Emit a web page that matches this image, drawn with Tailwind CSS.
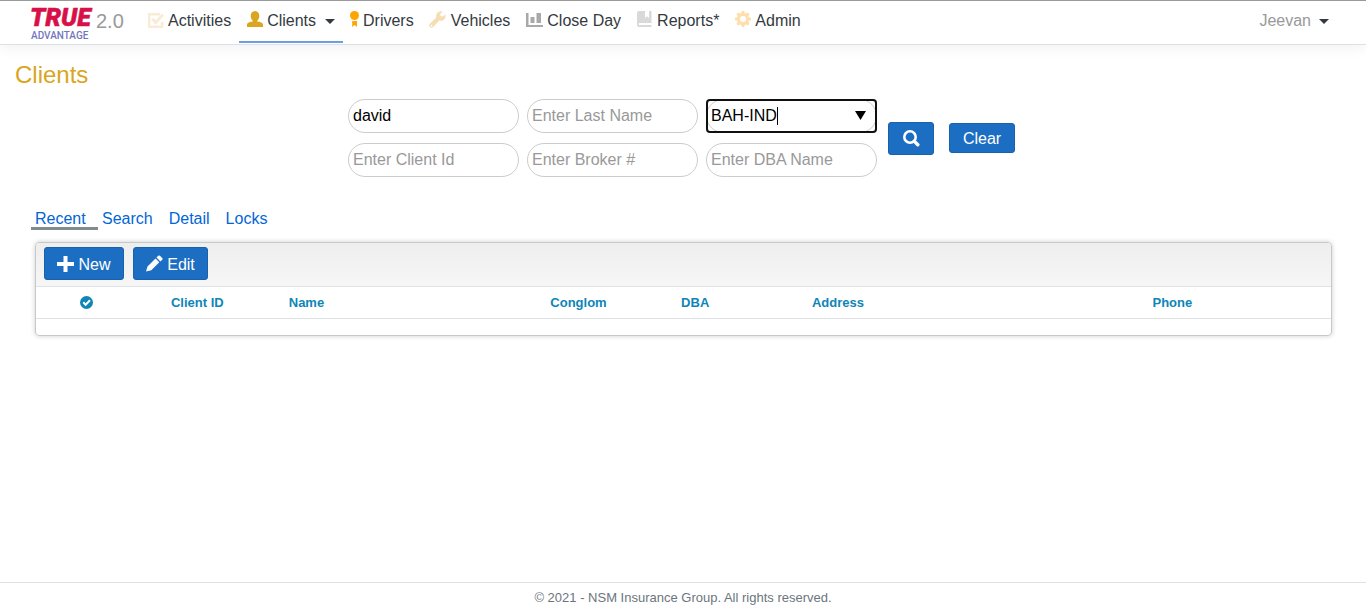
<!DOCTYPE html>
<html lang="en">
<head>
<meta charset="utf-8">
<meta name="viewport" content="width=device-width, initial-scale=1">
<title>Clients - True Advantage 2.0</title>
<script src="https://cdn.jsdelivr.net/npm/@tailwindcss/browser@4"></script>
</head>
<body class="flex min-h-screen flex-col bg-white font-['Liberation_Sans',Arial,sans-serif] text-base text-[#212529]">
<header class="flex h-[45px] shrink-0 items-start border-t border-b border-t-[#999] border-b-[#dee2e6] pr-[37px] pl-[29px] shadow-[0_4px_12px_rgba(0,0,0,0.05)]">
  <a href="#" class="flex w-[111px] items-start gap-[3px]" aria-label="True Advantage 2.0">
    <svg class="h-10 w-16 overflow-visible" viewBox="0 0 64 40">
      <text x="1" y="25" font-family="Roboto, sans-serif" font-size="25" font-weight="900" font-style="italic" fill="#d81048" stroke="#d81048" stroke-width="0.500">TRUE</text>
      <text x="2" y="38" font-family="Roboto, sans-serif" font-size="10" font-weight="500" fill="#7376bd">ADVANTAGE</text>
    </svg>
    <span class="mt-1 text-xl leading-8 text-[#999]">2.0</span>
  </a>
  <nav class="flex h-[42px] text-[#343a40]">
    <a href="#" class="flex items-start gap-1 px-2 pt-2">
      <svg class="mt-1 h-4 w-4" viewBox="0 0 16 16" fill="none" stroke="#faebd7"><path d="M12 1.200H1.200v12.600H14V9" stroke-width="2.400"/><path d="M4.200 5.800l3.500 3.800L15 1.500" stroke-width="3"/></svg>
      <span>Activities</span></a>
    <a href="#" class="flex items-start gap-1 border-b-2 border-[#6b9fe0] px-2 pt-2">
      <svg class="mt-[2px] h-4 w-4" viewBox="0 0 16 16" fill="#daa520"><path d="M8 0C5.200 0 3.700 2.200 3.700 5c0 2 .8 3.700 2 4.700v.8C3.500 10.900 0 11.500 0 13.700V16h16v-2.300c0-2.200-3.500-2.800-5.700-3.200v-.8c1.200-1 2-2.700 2-4.700 0-2.800-1.500-5-4.300-5z"/></svg>
      <span>Clients</span>
      <svg class="mt-[10px] ml-[5px] h-[5px] w-[10px]" viewBox="0 0 10 5" fill="#343a40"><path d="M0 0h10L5 5z"/></svg></a>
    <a href="#" class="flex items-start gap-1 px-[7px] pt-2">
      <svg class="mt-[2px] h-4 w-[9px]" viewBox="0 0 9 16"><circle cx="4.500" cy="4.500" r="4.500" fill="orange"/><path d="M2.200 10h4.800v6l-2.400-2L2.200 16z" fill="orange"/></svg>
      <span>Drivers</span></a>
    <a href="#" class="flex items-start gap-[5px] px-2 pt-2">
      <svg class="mt-[2px] h-[17px] w-[17px]" viewBox="0 0 17 17" fill="#f5deb3"><path fill-rule="evenodd" d="M16.500 3.400c.5 2.400-.5 4.800-2.400 5.800-1.200.6-2.500.6-3.700.3L4.200 16c-.9 1-2.500 1-3.400.1s-.9-2.500.1-3.400L7.300 6.600C6.700 4.700 7.200 2.500 8.900 1.200 10.200.2 12 0 13.500.4L11.200 2.900l.4 2.100 2.200.5zM2.500 13.700a.9.9 0 1 0 0 1.800.9.9 0 0 0 0-1.800z"/></svg>
      <span>Vehicles</span></a>
    <a href="#" class="flex items-start gap-1 px-2 pt-2">
      <svg class="mt-[4px] h-[15px] w-[17px]" viewBox="0 0 17 15" fill="#a9a9a9"><path d="M0 0h2.500v12H17v2H0zM4.500 4h4v6h-4zM10.500 0h4.500v10h-4.500z"/></svg>
      <span>Close Day</span></a>
    <a href="#" class="flex items-start gap-[5px] px-2 pt-2">
      <svg class="mt-[2px] h-4 w-[15px]" viewBox="0 0 15 16" fill="#d9d9d9"><path d="M2 0h6v7l2-1.700L12 7V0h2.500v12H2.700c-1.300 0-1.300 2 0 2H14.500v2H2c-1.200 0-2-.8-2-2V2C0 .8.800 0 2 0z"/></svg>
      <span>Reports*</span></a>
    <a href="#" class="flex items-start gap-1 px-2 pt-2">
      <svg class="mt-[2px] h-4 w-4" viewBox="0 0 16 16" fill="#ffdead"><path fill-rule="evenodd" d="M6.700 0h2.600l.5 2.200 1 .4 2-1.200 1.800 1.800-1.200 2 .4 1 2.200.5v2.600l-2.200.5-.4 1 1.200 2-1.800 1.800-2-1.200-1 .4-.5 2.200H6.700l-.5-2.200-1-.4-2 1.200-1.800-1.800 1.200-2-.4-1L0 9.300V6.700l2.200-.5.4-1-1.200-2 1.800-1.800 2 1.200 1-.4zM8 5a3 3 0 1 0 0 6 3 3 0 0 0 0-6z"/></svg>
      <span>Admin</span></a>
  </nav>
  <button type="button" class="ml-auto flex items-center gap-2 pt-2 text-[#999]">Jeevan
    <svg class="h-[5px] w-[10px]" viewBox="0 0 10 5" fill="#343a40"><path d="M0 0h10L5 5z"/></svg></button>
</header>

<main class="grow">
  <h1 class="px-[15px] pt-4 text-2xl leading-7 text-[#daa520]">Clients</h1>
  <form class="mt-[10px] flex items-center justify-center gap-[11px] pr-[3px]">
    <div class="grid grid-cols-3 gap-x-2 gap-y-[10px]">
      <input aria-label="First name" value="david" class="h-[34px] w-[171px] rounded-full border border-[#ccc] px-1 text-black placeholder:text-[#999]">
      <input aria-label="Last name" placeholder="Enter Last Name" class="h-[34px] w-[171px] rounded-full border border-[#ccc] px-1 placeholder:text-[#999]">
      <div class="relative">
        <input aria-label="Conglom" list="congloms" value="BAH-IND" class="h-[34px] w-[171px] rounded-full border border-[#ccc] px-1 text-black">
        <datalist id="congloms"><option value="BAH-IND"></option></datalist>
        <span class="pointer-events-none absolute inset-0 rounded border-2 border-[#101010]"></span>
        <span class="pointer-events-none absolute top-2 left-[71px] h-[18px] w-px bg-black"></span>
        <svg class="pointer-events-none absolute top-3 right-[11px] h-[9px] w-[11px]" viewBox="0 0 11 9"><path d="M0 0h11L5.500 9z"/></svg>
      </div>
      <input aria-label="Client Id" placeholder="Enter Client Id" class="h-[34px] w-[171px] rounded-full border border-[#ccc] px-1 placeholder:text-[#999]">
      <input aria-label="Broker number" placeholder="Enter Broker #" class="h-[34px] w-[171px] rounded-full border border-[#ccc] px-1 placeholder:text-[#999]">
      <input aria-label="DBA name" placeholder="Enter DBA Name" class="h-[34px] w-[171px] rounded-full border border-[#ccc] px-1 placeholder:text-[#999]">
    </div>
    <div class="flex items-center gap-[15px]">
      <button type="button" aria-label="Search" class="flex h-[33px] w-[46px] items-center justify-center rounded-[3px] border border-[#1861ac] bg-[#1b6ec2]">
        <svg class="h-[17px] w-[17px]" viewBox="0 0 17 17" fill="none" stroke="#fff"><circle cx="7" cy="7" r="5.700" stroke-width="2.600"/><path d="M11.400 11.400l3.400 3.400" stroke-width="3.400" stroke-linecap="round"/></svg></button>
      <button type="button" class="h-[30px] w-[66px] rounded-[3px] border border-[#1861ac] bg-[#1b6ec2] pt-px leading-7 text-white">Clear</button>
    </div>
  </form>

  <nav class="mt-[29px] flex pl-[31px] text-[#0366d6]">
    <a href="#" class="w-[67px] border-b-3 border-[#7f8c8d] pt-1 pl-1 leading-[17px]">Recent</a>
    <a href="#" class="pt-1 pr-4 pl-1 leading-[17px]">Search</a>
    <a href="#" class="pt-1 pr-4 leading-[17px]">Detail</a>
    <a href="#" class="pt-1 leading-[17px]">Locks</a>
  </nav>

  <section class="mt-3 mr-[34px] ml-[35px] rounded border border-[#c8c8c8] pb-4 shadow-[0_0_5px_rgba(0,0,0,0.2)]">
    <div class="flex h-11 items-start gap-[9px] rounded-t border-b border-[#dee2e6] bg-linear-to-b from-[#eee] to-[#f6f6f6] px-2 pt-1">
      <button type="button" class="flex h-[33px] w-20 items-center justify-center gap-1 rounded-[3px] border border-[#1861ac] bg-[#1b6ec2] text-white">
        <svg class="h-4 w-[17px]" viewBox="0 0 17 16" fill="#fff"><path d="M6.500 0h4v6H17v4h-6.500v6h-4v-6H0V6h6.500z"/></svg><span class="pt-[2px]">New</span></button>
      <button type="button" class="flex h-[33px] w-[75px] items-center justify-center gap-1 rounded-[3px] border border-[#1861ac] bg-[#1b6ec2] text-white">
        <svg class="h-[17px] w-[17px]" viewBox="0 0 17 17" fill="#fff"><path d="M0 16.500l1.500-5L9.500 3.500l3.800 3.800-8 8zM10.500 2.500l1.700-1.700q.9-.8 1.800 0l2.200 2.200q.8.9 0 1.700l-1.800 1.700z"/></svg><span class="pt-[2px]">Edit</span></button>
    </div>
    <table class="w-full table-fixed text-left text-[13px] leading-5 text-[#0e85b8]">
      <thead>
        <tr class="h-[31px] border-b border-[#dee2e6]">
          <th scope="col" class="w-[9.8%] pl-[44px]"><svg role="img" aria-label="Selected" class="h-[13px] w-[13px]" viewBox="0 0 13 13"><circle cx="6.500" cy="6.500" r="6.500" fill="#0e85b8"/><path d="M3.300 6.300l2.300 2.400L10 4.300" fill="none" stroke="#fff" stroke-width="2"/></svg></th>
          <th scope="col" class="w-[9.1%] pt-px pl-2">Client ID</th>
          <th scope="col" class="w-[20.2%] pt-px pl-2">Name</th>
          <th scope="col" class="w-[10.1%] pt-px pl-2">Conglom</th>
          <th scope="col" class="w-[10.1%] pt-px pl-2">DBA</th>
          <th scope="col" class="w-[26.3%] pt-px pl-2">Address</th>
          <th scope="col" class="pt-px pl-2">Phone</th>
        </tr>
      </thead>
    </table>
  </section>
</main>

<footer class="h-[31px] border-t border-[#dee2e6] pt-[5px] text-center text-[13px] leading-5 text-[#6c757d]">© 2021 - NSM Insurance Group. All rights reserved.</footer>
</body>
</html>
